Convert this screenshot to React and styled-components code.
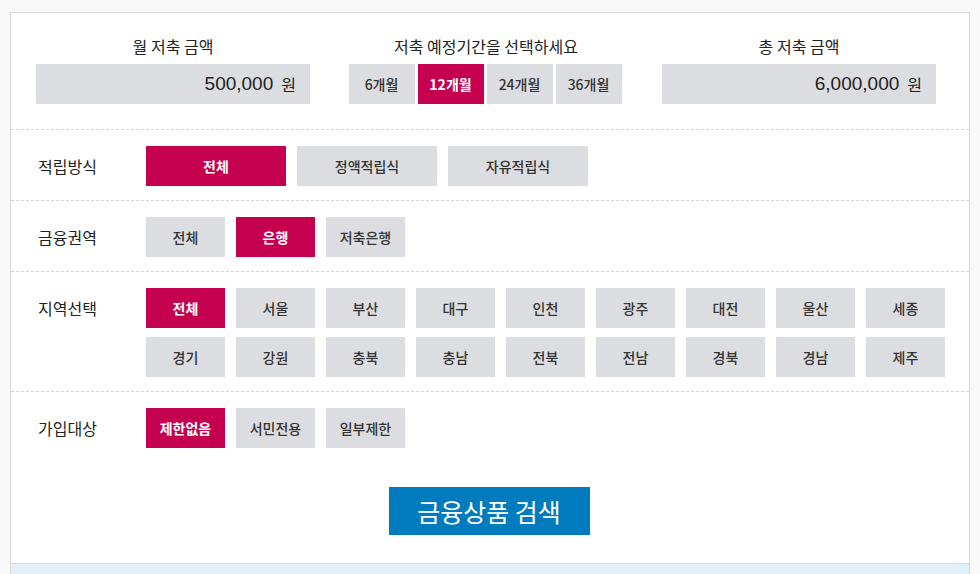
import React, { useState } from "react";
import styled, { createGlobalStyle } from "styled-components";

const GlobalStyle = createGlobalStyle`
    body {
        margin: 0;
        background: #f9f9f9;
        font-family: "Noto Sans CJK KR", "Noto Sans", sans-serif;
        color: #222;
    }
`;

const Page = styled.div`
    padding: 12px 10px 0 10px;
    width: 960px;
`;

const Panel = styled.div`
    background: #fff;
    border: 1px solid #d9d9d9;
`;

const Summary = styled.div`
    display: flex;
    justify-content: space-between;
    padding: 23px 33px 25px 25px;
    border-bottom: 1px dashed #d4d4d4;
`;

const Field = styled.div`
    display: flex;
    flex-direction: column;
    align-items: center;
`;

const FieldLabel = styled.div`
    font-size: 16px;
    line-height: 20px;
    height: 20px;
    margin-bottom: 8px;
    color: #222;
`;

const AmountBox = styled.div`
    width: 274px;
    height: 40px;
    box-sizing: border-box;
    background: #dcdde1;
    display: flex;
    align-items: center;
    justify-content: flex-end;
    padding-right: 14px;
    color: #222;
`;

const Amount = styled.span`
    font-family: "Liberation Sans", "Noto Sans CJK KR", sans-serif;
    font-size: 19px;
    margin-right: 8px;
`;

const Won = styled.span`
    font-size: 16px;
`;

const PeriodGroup = styled.div`
    display: flex;
    gap: 3px;
    margin-left: -2px;
`;

const Chip = styled.button`
    height: 40px;
    width: ${(p) => p.$w}px;
    border: none;
    margin: 0;
    padding: 0;
    background: ${(p) => (p.$active ? "#c5004f" : "#dcdde1")};
    color: ${(p) => (p.$active ? "#fff" : "#333")};
    font-family: "Noto Sans CJK KR", "Noto Sans", sans-serif;
    font-size: 14px;
    font-weight: ${(p) => (p.$active ? 700 : 500)};
    cursor: pointer;
`;

const Row = styled.div`
    display: flex;
    align-items: flex-start;
    padding: 16px 0 14px 0;
    border-bottom: ${(p) => (p.$last ? "none" : "1px dashed #d4d4d4")};
`;

const RowLabel = styled.div`
    width: 108px;
    padding-left: 27px;
    height: 40px;
    line-height: 40px;
    font-size: 16px;
    color: #222;
    flex-shrink: 0;
`;

const Options = styled.div`
    display: flex;
    flex-wrap: wrap;
    gap: 9px 11px;
    width: 800px;
`;

const SearchArea = styled.div`
    display: flex;
    justify-content: center;
    padding: 25px 0 28px 0;
`;

const SearchButton = styled.button`
    width: 201px;
    height: 48px;
    border: none;
    background: #007bbd;
    color: #fff;
    font-family: "Noto Sans CJK KR", "Noto Sans", sans-serif;
    font-size: 25px;
    font-weight: 400;
    margin-left: -2px;
    cursor: pointer;
`;

const Strip = styled.div`
    height: 11px;
    background: #e1eff7;
    border-left: 1px solid #d9d9d9;
    border-right: 1px solid #d9d9d9;
`;

const periods = ["6개월", "12개월", "24개월", "36개월"];
const regions = [
    "전체", "서울", "부산", "대구", "인천", "광주", "대전", "울산", "세종",
    "경기", "강원", "충북", "충남", "전북", "전남", "경북", "경남", "제주",
];

const OptionRow = ({ label, items, value, onChange, width, last }) => (
    <Row $last={last}>
        <RowLabel>{label}</RowLabel>
        <Options>
            {items.map((item) => (
                <Chip key={item} $w={width} $active={item === value} onClick={() => onChange(item)}>
                    {item}
                </Chip>
            ))}
        </Options>
    </Row>
);

const App = () => {
    const [period, setPeriod] = useState("12개월");
    const [method, setMethod] = useState("전체");
    const [sector, setSector] = useState("은행");
    const [region, setRegion] = useState("전체");
    const [target, setTarget] = useState("제한없음");

    return (
        <Page>
            <GlobalStyle />
            <Panel>
                <Summary>
                    <Field>
                        <FieldLabel>월 저축 금액</FieldLabel>
                        <AmountBox>
                            <Amount>500,000</Amount>
                            <Won>원</Won>
                        </AmountBox>
                    </Field>
                    <Field>
                        <FieldLabel>저축 예정기간을 선택하세요</FieldLabel>
                        <PeriodGroup>
                            {periods.map((p) => (
                                <Chip key={p} $w={66} $active={p === period} onClick={() => setPeriod(p)}>
                                    {p}
                                </Chip>
                            ))}
                        </PeriodGroup>
                    </Field>
                    <Field>
                        <FieldLabel>총 저축 금액</FieldLabel>
                        <AmountBox>
                            <Amount>6,000,000</Amount>
                            <Won>원</Won>
                        </AmountBox>
                    </Field>
                </Summary>
                <OptionRow label="적립방식" items={["전체", "정액적립식", "자유적립식"]} value={method} onChange={setMethod} width={140} />
                <OptionRow label="금융권역" items={["전체", "은행", "저축은행"]} value={sector} onChange={setSector} width={79} />
                <OptionRow label="지역선택" items={regions} value={region} onChange={setRegion} width={79} />
                <OptionRow label="가입대상" items={["제한없음", "서민전용", "일부제한"]} value={target} onChange={setTarget} width={79} last />
                <SearchArea>
                    <SearchButton>금융상품 검색</SearchButton>
                </SearchArea>
            </Panel>
            <Strip />
        </Page>
    );
};

export default App;
